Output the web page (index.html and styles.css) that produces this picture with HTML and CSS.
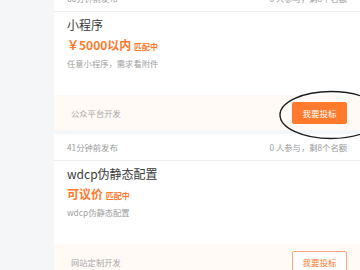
FILE: index.html
```html
<!DOCTYPE html>
<html lang="zh">
<head>
<meta charset="utf-8">
<link rel="stylesheet" href="styles.css">
</head>
<body>
<div class="page">
  <div class="list">
    <div class="card">
      <div class="head"><span>60分钟前发布</span><span>0 人参与，剩8个名额</span></div>
      <div class="body">
        <div class="title">小程序</div>
        <div class="price">￥5000以内 <span class="tag">匹配中</span></div>
        <div class="desc">任意小程序，需求看附件</div>
      </div>
      <div class="foot"><span>公众平台开发</span><button class="btn solid">我要投标</button></div>
    </div>
    <div class="card">
      <div class="head"><span>41分钟前发布</span><span>0 人参与，剩8个名额</span></div>
      <div class="body">
        <div class="title">wdcp伪静态配置</div>
        <div class="price">可议价 <span class="tag">匹配中</span></div>
        <div class="desc">wdcp伪静态配置</div>
      </div>
      <div class="foot"><span>网站定制开发</span><button class="btn outline">我要投标</button></div>
    </div>
  </div>
  <svg class="ring" width="82" height="52" viewBox="0 0 82 52"><ellipse cx="53" cy="26" rx="51" ry="23.5" fill="none" stroke="#1e1e1e" stroke-width="1.4"/></svg>
</div>
</body>
</html>
```
FILE: styles.css
```css
* { box-sizing: border-box; }
html, body { margin: 0; padding: 0; }
body {
  width: 360px; height: 270px; overflow: hidden;
  background: #f5f6f8;
  font-family: "Noto Sans CJK SC", "Noto Sans", sans-serif;
}
.page { position: relative; height: 270px; overflow: hidden; }
.list {
  margin-top: -15px;
  padding-left: 54px;
  display: flex; flex-direction: column; gap: 4px;
}
.card { background: #fff; }
.head {
  height: 27px;
  border-bottom: 1px solid #eeeeee;
  display: flex; justify-content: space-between; align-items: center;
  padding: 0 13px;
  font-size: 8.3px; color: #9a9a9a;
}
.body { padding: 3px 13px 25px; }
.title { font-size: 12px; line-height: 20px; color: #3a3a3a; }
.price {
  font-size: 12px; line-height: 19px; font-weight: bold; color: #ff7a2c;
}
.tag { font-size: 8px; font-weight: bold; }
.desc { font-size: 8.3px; line-height: 14px; color: #a0a0a0; }
.foot {
  height: 35px;
  background: #fffaf6;
  display: flex; justify-content: space-between; align-items: center;
  padding: 0 13px 0 17px;
  font-size: 8.3px; color: #a8a8a8;
}
.btn {
  width: 55px; height: 22px;
  font-family: inherit; font-size: 8.5px;
  border-radius: 2px; padding: 0;
}
.solid { background: #ff7a2c; color: #fff; border: 1px solid #ff7a2c; }
.outline { background: #fff; color: #ff7a2c; border: 1px solid #f7a77b; }
.ring { position: absolute; left: 278px; top: 89px; }
```
